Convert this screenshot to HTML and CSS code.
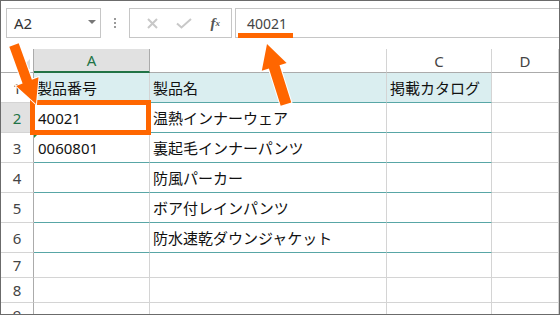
FILE: index.html
```html
<!DOCTYPE html>
<html>
<head>
    <link rel="stylesheet" href="styles.css">
</head>
<body>
    <div class="frame">
        <div class="formula-bar">
            <div class="name-box">
                <span>A2</span>
                <span class="caret"></span>
            </div>
            <div class="dots"><i></i><i></i><i></i></div>
            <div class="fx-group">
                <span class="btn">
                    <svg width="11" height="11" viewBox="0 0 11 11"><path d="M1 1 L10 10 M10 1 L1 10" /></svg>
                </span>
                <span class="btn">
                    <svg width="16" height="11" viewBox="0 0 16 11"><path d="M1 5.5 L5.5 9.5 L15 1" /></svg>
                </span>
                <span class="btn fx"><i>f</i><sub>x</sub></span>
            </div>
            <div class="formula-input">40021</div>
        </div>

        <div class="sheet">
            <div class="corner"></div>
            <div class="col-head selected">A</div>
            <div class="col-head">B</div>
            <div class="col-head">C</div>
            <div class="col-head">D</div>

            <div class="row-head">1</div>
            <div class="cell tbl th">製品番号</div>
            <div class="cell tbl th">製品名</div>
            <div class="cell tbl th">掲載カタログ</div>
            <div class="cell"></div>

            <div class="row-head selected">2</div>
            <div class="cell tbl num">40021</div>
            <div class="cell tbl">温熱インナーウェア</div>
            <div class="cell tbl"></div>
            <div class="cell"></div>

            <div class="row-head">3</div>
            <div class="cell tbl num flag">0060801</div>
            <div class="cell tbl">裏起毛インナーパンツ</div>
            <div class="cell tbl"></div>
            <div class="cell"></div>

            <div class="row-head">4</div>
            <div class="cell tbl"></div>
            <div class="cell tbl">防風パーカー</div>
            <div class="cell tbl"></div>
            <div class="cell"></div>

            <div class="row-head">5</div>
            <div class="cell tbl"></div>
            <div class="cell tbl">ボア付レインパンツ</div>
            <div class="cell tbl"></div>
            <div class="cell"></div>

            <div class="row-head">6</div>
            <div class="cell tbl"></div>
            <div class="cell tbl">防水速乾ダウンジャケット</div>
            <div class="cell tbl"></div>
            <div class="cell"></div>

            <div class="row-head">7</div>
            <div class="cell"></div>
            <div class="cell"></div>
            <div class="cell"></div>
            <div class="cell"></div>

            <div class="row-head">8</div>
            <div class="cell"></div>
            <div class="cell"></div>
            <div class="cell"></div>
            <div class="cell"></div>

            <div class="row-head">9</div>
            <div class="cell"></div>
            <div class="cell"></div>
            <div class="cell"></div>
            <div class="cell"></div>
        </div>

        <!-- annotations -->
        <div class="mark-box"></div>
        <div class="mark-line"></div>
        <svg class="arrows" width="560" height="315" viewBox="0 0 560 315">
            <polygon points="9.3,46.8 18.7,43.2 31.9,79.8 38.5,77.3 36,104 16.1,85.9 22.6,83.4" />
            <polygon points="280.7,105.7 291.3,102.4 279.5,65.2 286.6,62.9 267,44 261.8,70.7 268.9,68.5" />
        </svg>
    </div>
</body>
</html>
```

FILE: styles.css
```css
body {
    margin: 0;
    padding: 0;
    background-color: #fff;
}

.frame {
    position: relative;
    width: 560px;
    height: 315px;
    box-sizing: border-box;
    border: 1px solid #6b6b6b;
    overflow: hidden;
    background-color: #fff;
    font-family: "Noto Sans CJK JP", "Noto Sans", sans-serif;
}

/* formula bar */
.formula-bar {
    display: flex;
    align-items: stretch;
    height: 30px;
    padding: 7px 0 0 5px;
    margin-bottom: 11px;
}

.name-box {
    width: 95px;
    box-sizing: border-box;
    border: 1px solid #c6c6c6;
    display: flex;
    align-items: center;
    justify-content: space-between;
    padding: 0 4px 0 7px;
    font-family: "Noto Sans", sans-serif;
    font-size: 15px;
    color: #333;
}

.caret {
    width: 0;
    height: 0;
    border-left: 4px solid transparent;
    border-right: 4px solid transparent;
    border-top: 4px solid #777;
    margin-top: -3px;
}

.dots {
    width: 28px;
    display: flex;
    flex-direction: column;
    align-items: center;
    justify-content: center;
    gap: 2px;
}

.dots i {
    width: 2px;
    height: 2px;
    background-color: #9a9a9a;
}

.fx-group {
    width: 103px;
    box-sizing: border-box;
    border: 1px solid #c6c6c6;
    display: flex;
    align-items: center;
    padding-left: 7px;
}

.btn {
    width: 33px;
    display: flex;
    justify-content: center;
    align-items: center;
}

.btn svg path {
    fill: none;
    stroke: #c8c8c8;
    stroke-width: 2;
}

.fx {
    font-family: "Liberation Serif", serif;
    color: #555;
    font-size: 15px;
    font-weight: bold;
}

.fx sub {
    font-size: 9px;
    font-style: italic;
}

.formula-input {
    flex: 1;
    margin-left: 3px;
    border: 1px solid #c6c6c6;
    border-right: none;
    padding-left: 11px;
    display: flex;
    align-items: center;
    font-family: "Noto Sans", sans-serif;
    font-size: 14px;
    color: #444;
}

/* sheet grid */
.sheet {
    display: grid;
    grid-template-columns: 33px 116px 237px 105px 1fr;
    grid-template-rows: 24px repeat(6, 30px) repeat(3, 25px);
}

.corner {
    position: relative;
    border-right: 1px solid #ababab;
    border-bottom: 1px solid #ababab;
}

.corner::after {
    content: "";
    position: absolute;
    right: 3px;
    bottom: 3px;
    border-left: 10px solid transparent;
    border-bottom: 10px solid #dfdfdf;
}

.col-head {
    border-right: 1px solid #d4d4d4;
    border-bottom: 1px solid #ababab;
    display: flex;
    align-items: center;
    justify-content: center;
    font-family: "Noto Sans", sans-serif;
    font-size: 15px;
    color: #444;
}

.col-head.selected {
    background-color: #e1e1e1;
    color: #217346;
    border-right-color: #ababab;
    border-bottom: 2px solid #217346;
}

.row-head {
    border-right: 1px solid #ababab;
    border-bottom: 1px solid #d4d4d4;
    display: flex;
    align-items: center;
    justify-content: center;
    font-family: "Noto Sans", sans-serif;
    font-size: 15px;
    color: #444;
}

.row-head.selected {
    background-color: #e1e1e1;
    color: #217346;
}

.cell {
    position: relative;
    border-right: 1px solid #d4d4d4;
    border-bottom: 1px solid #d4d4d4;
    display: flex;
    align-items: center;
    padding-left: 3px;
    font-size: 15px;
    color: #111;
    white-space: nowrap;
}

.cell.num {
    font-family: "Noto Sans", sans-serif;
    padding-left: 4px;
}

.cell.tbl {
    border-bottom-color: #58a6a6;
}

.cell.th {
    background-color: #daeef0;
}

.cell.flag::before {
    content: "";
    position: absolute;
    left: 0;
    top: 0;
    border-top: 5px solid #1f8a3c;
    border-right: 5px solid transparent;
}

/* orange annotations */
.mark-box {
    position: absolute;
    left: 29px;
    top: 99px;
    width: 121px;
    height: 35px;
    box-sizing: border-box;
    border: 5px solid #ff6600;
}

.mark-line {
    position: absolute;
    left: 237px;
    top: 32px;
    width: 55px;
    height: 5px;
    background-color: #ff6600;
}

.arrows {
    position: absolute;
    left: -1px;
    top: -1px;
}

.arrows polygon {
    fill: #ff6600;
    stroke: #fff;
    stroke-width: 2;
    stroke-linejoin: miter;
    paint-order: stroke;
}
```
